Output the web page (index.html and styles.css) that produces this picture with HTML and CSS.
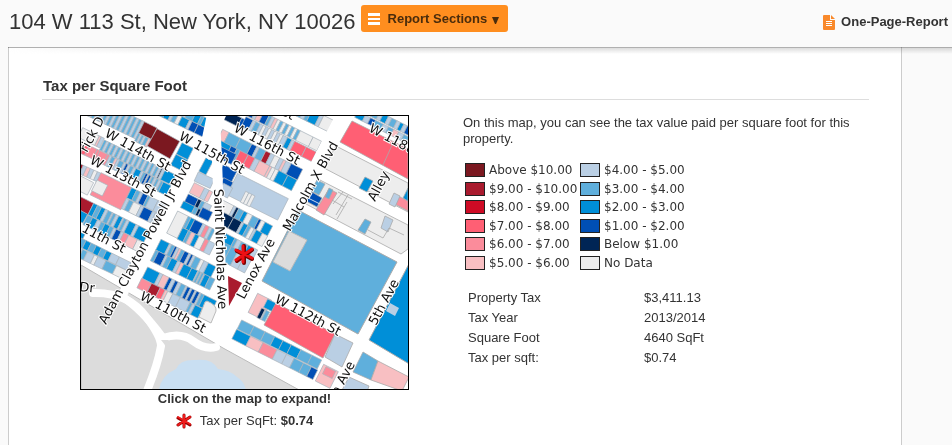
FILE: index.html
```html
<!DOCTYPE html>
<html lang="en">
<head>
    <meta charset="UTF-8">
    <meta name="viewport" content="width=device-width, initial-scale=1.0">
    <title>104 W 113 St, New York, NY 10026</title>
    <link rel="stylesheet" href="styles.css">
</head>
<body>
    <header class="top-bar">
        <h1>104 W 113 St, New York, NY 10026</h1>
        <button type="button" class="sections-btn">
            <svg class="menu-icon" viewBox="0 0 12 12" aria-hidden="true"><path d="M0 0h12v3H0zM0 5h12v2H0zM0 9h12v3H0z" fill="#fff"/></svg>
            <span>Report Sections</span>
            <svg class="caret" viewBox="0 0 8 8" aria-hidden="true"><path d="M0 1h7L4 8H3z" fill="#4a2c0c"/></svg>
        </button>
        <a href="#one-page" class="one-page">
            <svg viewBox="0 0 12 15" aria-hidden="true">
                <path d="M1 0h6v5h5v9q0 1-1 1H1q-1 0-1-1V1q0-1 1-1z" fill="#f9892b"/>
                <path d="M8 0l4 4H8z" fill="#f9892b"/>
                <path d="M3 6.500h6M3 8.500h6M3 10.500h6" stroke="#fff"/>
            </svg>
            <span>One-Page-Report</span>
        </a>
    </header>

    <main class="card">
        <h2>Tax per Square Foot</h2>
        <div class="columns">
            <section class="map-col">
                <a href="#map" class="map-link">
                    <svg class="map" viewBox="0 0 327 273" role="img" aria-label="Tax map">
                        <rect width="327" height="273" fill="#fff"/>
                        <!-- park -->
                        <path d="M0 149L142 232L220 275H0z" fill="#dcdcdc" stroke="#bbb"/>
                        <path d="M78 273q3-14 17-20q4-10 20-9q16-2 22 9q12 1 19 8q8 5 9 14z" fill="#c9dff2"/>
                        <g fill="none" stroke="#fff" stroke-linecap="round">
                            <path d="M12 177Q48 176 66 202Q80 221 80 230Q77 248 66 275" stroke-width="8"/>
                            <path d="M40 180Q60 192 82 222Q100 216 112 225T135 231" stroke-width="8"/>
                        </g>
                        <path d="M80 224h8l-4 5z" fill="#dcdcdc"/>
                        <!-- parcels.js works in thirds of a map pixel -->
                        <g id="parcels" transform="scale(.3333)"></g>

                        <g stroke="#aaa" stroke-width=".8">
                            <path d="M271 5L327 33V63L259 26z" fill="#ff5f74"/>
                            <path d="M312 27l-10 22" fill="none"/>
                            <path d="M255 30L327 67V96L243 52z" fill="#ededed"/>
                            <path d="M284 61l8 4-6 11-8-4z" fill="#008fd8"/>
                            <path d="M317 80l10 5v10l-15-8z" fill="#fb8c9b"/>
                            <path d="M313 77l6 3-5 11-6-3z" fill="#bacfe4"/>
                            <path d="M327 72v13l-5-3z" fill="#008fd8"/>
                            <path d="M237 63L327 109V133L320 138L225 88z" fill="#ededed"/>
                            <path d="M236 64l8 4-6 11-8-4z" fill="#5fafdc"/>
                            <path d="M231 76l10 6-5 9-11-6z" fill="#004fb5"/>
                            <path d="M227 82l12 6" stroke="#fff"/>
                            <path d="M248 73l8 4-13 22-8-5z" fill="#fb8c9b"/>
                            <path d="M244 81l4 2 4-9-4-2z" fill="#5fafdc"/>
                            <path d="M262 76L252 88M267 79l-12 20M251 84l12 7M257 76l14 7" fill="none"/>
                            <path d="M284 103l6 3-6 12-7-4z" fill="#5fafdc"/>
                            <path d="M304 100l8 4-5 12-7-4z" fill="#bacfe4"/>
                            <path d="M266 86l-10 17M287 114l15 8 6-10 15 7" fill="none"/>
                        </g>
                        <path d="M217 94L316 146L277 218L181 165z" fill="#5fafdc" stroke="#aaa"/>
                        <path d="M208 115l18 9-17 31-17-9z" fill="#dcdcdc" stroke="#bbb"/>
                        <path d="M330 144L288 224L330 249z" fill="#008fd8" stroke="#aaa"/>
                        <path d="M309 187l9 5-4 8-9-5z" fill="#bacfe4"/>
                        <g stroke="#aaa" stroke-width=".8">
                            <path d="M195 187L254 218L242 242L183 209z" fill="#ff5f74"/>
                            <path d="M254 218l18 9-11 24-17-10z" fill="#bacfe4"/>
                            <path d="M282 236l15 9-7 19-18-8z" fill="#5fafdc"/>
                            <path d="M297 245l31 16-7 14-31-11z" fill="#f8bfc2"/>
                            <path d="M268 261l20 9-2 6h-26z" fill="#bacfe4"/>
                        </g>

                        <!-- avenues -->
                        <g fill="none" stroke="#fff">
                            <path d="M137 -5L121 34L56 150L40 182" stroke-width="9"/>
                            <path d="M134 0L136 43L141 190" stroke-width="10"/>
                            <path d="M264 -10L228 60L160 192" stroke-width="9"/>
                        </g>
                        <path d="M126 -2H146L138 14L137 38L128 44L118 36z" fill="#fff"/>
                        <path d="M147 160l14 7-13 23z" fill="#a91b2e"/>
                        <path d="M126 185q10 4 9 10l-5 12-12-6 6-15z" fill="#ededed" stroke="#bbb"/>

                        <g class="street">
                            <text transform="translate(23 20) rotate(29)">W 114th St</text>
                            <text transform="translate(8 47) rotate(28)">W 113th St</text>
                            <text transform="translate(97 23) rotate(29)">W 115th St</text>
                            <text transform="translate(152 15) rotate(28)">W 116th St</text>
                            <text transform="translate(287 15) rotate(28)">W 118th St</text>
                            <text transform="translate(0 115) rotate(28)">11th St</text>
                            <text transform="translate(58 183) rotate(28)">W 110th St</text>
                            <text transform="translate(193 186) rotate(28)">W 112th St</text>
                            <text transform="translate(199 -2) rotate(28)">St</text>
                            <text transform="translate(-2 175) rotate(6)">Dr</text>
                            <text transform="translate(25 209) rotate(-62)">Adam Clayton Powell Jr Blvd</text>
                            <text transform="translate(133 73) rotate(88)">Saint Nicholas Ave</text>
                            <text transform="translate(163 184) rotate(-62)">Lenox Ave</text>
                            <text transform="translate(209 116) rotate(-61)">Malcolm X Blvd</text>
                            <text transform="translate(294 86) rotate(-62)">Alley</text>
                            <text transform="translate(295 210) rotate(-62)">5th Ave</text>
                            <text transform="translate(251 292) rotate(-62)">5th Ave</text>
                            <text transform="translate(6 37) rotate(-62)">rick D</text>
                        </g>
                        <g fill="none" stroke-linecap="round">
                            <path d="M163 130v17M156 135l15 8M156 145l15-11" stroke="#700" stroke-width="4"/>
                            <path d="M162 130v16M155 134l16 8M155 144l16-11" stroke="#ee0f14" stroke-width="3"/>
                        </g>
                    </svg>
                    <strong>Click on the map to expand!</strong>
                </a>
                <p class="map-key">
                    <svg viewBox="0 0 16 16" aria-hidden="true">
                        <g fill="none" stroke-linecap="round">
                            <path d="M8 2v12M2 5l12 7M2 12l12-8" stroke="#900" stroke-width="3"/>
                            <path d="M8 2v12M2 4l12 7M2 12l12-8" stroke="#ee1c1c" stroke-width="2"/>
                        </g>
                    </svg>
                    <span>Tax per SqFt: <b>$0.74</b></span>
                </p>
            </section>

            <section class="info-col">
                <p>On this map, you can see the tax value paid per square foot for this property.</p>
                <ul class="legend">
                    <li><i class="swatch c-above"></i>Above $10.00</li>
                    <li><i class="swatch c-9"></i>$9.00 - $10.00</li>
                    <li><i class="swatch c-8"></i>$8.00 - $9.00</li>
                    <li><i class="swatch c-7"></i>$7.00 - $8.00</li>
                    <li><i class="swatch c-6"></i>$6.00 - $7.00</li>
                    <li><i class="swatch c-5"></i>$5.00 - $6.00</li>
                    <li><i class="swatch c-4"></i>$4.00 - $5.00</li>
                    <li><i class="swatch c-3"></i>$3.00 - $4.00</li>
                    <li><i class="swatch c-2"></i>$2.00 - $3.00</li>
                    <li><i class="swatch c-1"></i>$1.00 - $2.00</li>
                    <li><i class="swatch c-below"></i>Below $1.00</li>
                    <li><i class="swatch c-none"></i>No Data</li>
                </ul>
                <table class="facts">
                    <tr><th scope="row">Property Tax</th><td>$3,411.13</td></tr>
                    <tr><th scope="row">Tax Year</th><td>2013/2014</td></tr>
                    <tr><th scope="row">Square Foot</th><td>4640 SqFt</td></tr>
                    <tr><th scope="row">Tax per sqft:</th><td>$0.74</td></tr>
                </table>
            </section>
        </div>
    </main>
    <script src="parcels.js"></script>
</body>
</html>
```

FILE: styles.css
```css
* {
    box-sizing: border-box;
}

body {
    margin: 0;
    min-height: 100vh;
    display: flex;
    flex-direction: column;
    background: #fafafa;
    color: #333;
    font-family: "Liberation Sans", Arial, sans-serif;
    font-size: 13px;
}

h1, h2, p, ul {
    margin: 0;
    padding: 0;
}

.top-bar {
    display: flex;
    align-items: flex-start;
    padding: 5px 4px 15px 9px;
}

h1 {
    font-size: 22px;
    font-weight: normal;
    line-height: 27px;
    padding-top: 3px;
    margin-bottom: -3px;
    margin-right: 5px;
}

.sections-btn {
    display: flex;
    align-items: center;
    height: 27px;
    padding: 0 8px 0 7px;
    border: 0;
    border-radius: 3px;
    background: #ff8e1f;
    color: #4a2c0c;
    font: bold 13px "Liberation Sans", Arial, sans-serif;
    cursor: pointer;
}

.menu-icon {
    width: 12px;
    height: 12px;
    margin-right: 8px;
}

.caret {
    width: 8px;
    height: 8px;
    margin: 3px 0 0 5px;
}

.one-page {
    display: flex;
    align-items: center;
    gap: 6px;
    margin-left: auto;
    padding-top: 9px;
    color: #333;
    font-weight: bold;
    line-height: 16px;
    text-decoration: none;
}

.one-page svg {
    width: 12px;
    height: 15px;
}

.card {
    flex: 1;
    margin: 0 50px 0 8px;
    padding: 29px 32px 14px 33px;
    border: solid #ccc;
    border-width: 0 1px;
    background: #fff;
}

/* line and soft shadow under the header */
.top-bar::after {
    content: "";
    position: absolute;
    top: 47px;
    left: 8px;
    right: 0;
    height: 6px;
    border-top: 1px solid #b0b0b0;
    background: linear-gradient(to right, #fff, rgba(255, 255, 255, 0) 30%), linear-gradient(#ddd, rgba(255, 255, 255, 0));
    mix-blend-mode: multiply;
}

h2 {
    font-size: 15px;
    line-height: 20px;
    padding: 0 1px 3px;
    border-bottom: 1px solid #ddd;
}

.columns {
    display: flex;
    gap: 54px;
    padding: 15px 0 0 38px;
}

.map-col {
    width: 329px;
    flex: none;
    text-align: center;
}

.map-link {
    display: block;
    color: #333;
    line-height: 18px;
    text-decoration: none;
}

.map {
    display: block;
    width: 100%;
    border: 1px solid #000;
}

.street text {
    font: 13px "DejaVu Sans", sans-serif;
    fill: #111;
    stroke: #fff;
    stroke-width: 2;
    paint-order: stroke;
}

.map-key {
    display: flex;
    justify-content: center;
    align-items: center;
    gap: 8px;
    margin-top: 5px;
    line-height: 16px;
}

.map-key svg {
    width: 16px;
    height: 16px;
}

.info-col {
    flex: 1;
}

.info-col p {
    line-height: 16px;
}

.legend {
    display: grid;
    grid-template-rows: repeat(6, 1fr);
    grid-auto-flow: column;
    grid-auto-columns: 115px;
    height: 111px;
    margin: 14px 0 0 2px;
    list-style: none;
    font-family: "DejaVu Sans", sans-serif;
    font-size: 12px;
    white-space: nowrap;
}

.legend li {
    display: flex;
    align-items: center;
    gap: 4px;
}

.swatch {
    width: 20px;
    height: 14px;
    border: 1px solid #222;
}

.c-above { background: #7b1820; }
.c-9 { background: #a91b2e; }
.c-8 { background: #ce0b25; }
.c-7 { background: #ff5f74; }
.c-6 { background: #fb8c9b; }
.c-5 { background: #f8bfc2; }
.c-4 { background: #bacfe4; }
.c-3 { background: #5fafdc; }
.c-2 { background: #008fd8; }
.c-1 { background: #004fb5; }
.c-below { background: #002555; }
.c-none { background: #ededed; }

.facts {
    margin: 16px 0 0 5px;
    border-collapse: collapse;
    line-height: 20px;
}

.facts th, .facts td {
    padding: 0;
    font-weight: normal;
    text-align: left;
}

.facts th {
    width: 176px;
}
```

FILE: parcels.js
```js
const colors = {
    a: '#7b1820', 9: '#a91b2e', 8: '#ce0b25', 7: '#ff5f74', 6: '#fb8c9b', 5: '#f8bfc2',
    4: '#bacfe4', 3: '#5fafdc', 2: '#008fd8', 1: '#004fb5', 0: '#002555', n: '#ededed'
};

// [x1, y1, x2, y2 of the row's upper edge, depth, lots as colour + share of the width]
const rows = [
    // west of Powell Blvd
    [240, -60, 395, 15, 28, '33 43 34 24 32 44 35 24 32 26'],
    [228, -35, 382, 40, 28, '44 34 24 42 33 n3 26 42 15 18'],
    [40, -55, 190, 17, 58, '32 42 32 42 32 42 32 42 32 42 32 42 32 42 32 42 32 42 32 42'],
    [190, 17, 228, 36, 38, 'a9'],
    [172, 52, 208, 70, 26, '32 42 32 42 33 52'],
    [228, 38, 296, 76, 60, 'a9'],
    [303, 80, 337, 97, 38, '29'],
    [285, 115, 320, 133, 36, '29'],
    [5, 35, 70, 67, 32, 'n9 n8 52 43'],
    [-20, 68, 57, 104, 32, 'n9 53 74 69 63'],
    [70, 72, 285, 177, 33, '32 42 32 42 32 42 32 42 32 42 32 42 32 42 32 42 32 42 32 42 32 42 32 42 01 42 29'],
    [57, 104, 270, 209, 33, '67 62 42 33 52 42 34 42 12 42 33 42 25 42 32 12 41 12 41 32 42 32 42 32 27'],
    [0, 145, 60, 172, 28, '92 43 53 43 n3 43'],
    [-5, 178, 38, 200, 42, 'n9'],
    [60, 170, 152, 215, 74, '69'],
    [48, 192, 80, 208, 36, 'n9'],
    [152, 215, 265, 270, 34, '24 33 42 14 32 46 49'],
    [136, 247, 250, 303, 34, '42 33 n5 42 16 42 46'],
    [-10, 238, 38, 262, 38, '99'],
    [38, 262, 205, 345, 38, '23 33 23 42 33 41 32 42 23 41 32 42 25 42 28'],
    [-30, 268, 20, 295, 30, '23 33 24'],
    [20, 297, 188, 380, 32, '34 24 43 33 24 33 42 14 42 64 57 n5'],
    [-15, 342, 12, 355, 18, '92 22'],
    [0, 366, 150, 440, 26, '34 24 34 24 34 24 46 49'],
    [-12, 392, 138, 464, 28, '45 34 46 n3 47 39 n9'],
    // between Powell Blvd and St Nicholas
    [375, 125, 396, 136, 46, '29'],
    [352, 168, 400, 190, 30, '49'],
    [340, 200, 395, 228, 34, '59 44 53'],
    [322, 234, 392, 269, 34, '19 03 33 46'],
    [308, 255, 390, 296, 22, '29 33 02 18'],
    [365, 274, 395, 289, 30, '19'],
    [290, 285, 322, 301, 74, 'n9'],
    [322, 301, 402, 341, 38, '33 24 19 43 64 43 33'],
    [305, 335, 402, 383, 38, '26 33 54 24 n6 64 46'],
    [240, 370, 405, 452, 36, '28 42 33 12 42 52 33 14 42 12 42 35 n3 44 27'],
    [224, 402, 402, 490, 36, '33 17 42 34 26 43 53 28 26 41 32 41 32 41 25 35'],
    [200, 453, 407, 555, 38, '28 42 54 12 42 12 42 33 41 12 41 12 41 12 41 32 28'],
    [182, 487, 365, 578, 32, '68 97 74 52 n4 46 48 32 42 26'],
    // St Nicholas to Lenox
    [600, -65, 768, 18, 38, '23 42 32 12 44 32 42 32 25 42 n8'],
    [430, -20, 500, 15, 28, '09 13'],
    [510, -30, 722, 76, 32, '14 42 53 14 32 42 52 n2 32 n2 32 n2 32 n2 32 n9 n6'],
    [495, 2, 706, 108, 32, '15 42 33 42 n2 42 n2 42 n2 42 n2 43 23 42 78 77'],
    [425, 40, 665, 160, 36, '55 39 39 14 42 35 94 43 n4 43 52 44 19'],
    [420, 74, 648, 192, 36, '29 15 33 77 76 44 59 52 n3 n3 28 28'],
    [420, 92, 466, 115, 34, '19'],
    [427, 145, 468, 166, 38, '19'],
    [428, 185, 472, 207, 24, '19 '],
    [470, 172, 622, 248, 72, '49'],
    [428, 202, 455, 216, 34, '49'],
    [494, 226, 522, 240, 36, 'n3 n3 n3'],
    [425, 252, 575, 330, 34, 'n9 42 02 34 23 n4 35 12 n3 26'],
    [430, 290, 560, 360, 36, '09 08 42 24 33 n3 42 26 n5'],
    [430, 350, 530, 402, 30, '28 32 43 35 24 43'],
    [430, 380, 515, 425, 52, '39 39 49 49'],
    // above 118th
    [840, -40, 1000, 40, 24, '16 42 33 42 23 42 33 42 22 42 14'],
    [830, -14, 1000, 71, 20, '23 42 12 33 42 32 52 42 32 42'],
    // south-east
    [530, 532, 572, 553, 64, '59'],
    [560, 549, 588, 563, 28, '29'],
    [542, 576, 566, 588, 32, '03 41 33'],
    [482, 612, 722, 732, 30, '39 38 37 26 26 27 38 37'],
    [467, 640, 710, 762, 32, '29 58 69 46 45 36 35 14'],
    [728, 745, 772, 767, 56, '59'],
    [735, 752, 764, 766, 24, '69']
];

const parcels = document.getElementById('parcels');

rows.forEach(([x1, y1, x2, y2, depth, lots]) => {
    const length = Math.hypot(x2 - x1, y2 - y1);
    const angle = Math.atan2(y2 - y1, x2 - x1) * 180 / Math.PI;
    const list = lots.trim().split(' ');
    const total = list.reduce((sum, lot) => sum + Number(lot[1]), 0);

    const row = document.createElementNS('http://www.w3.org/2000/svg', 'g');
    row.setAttribute('transform', `translate(${x1} ${y1}) rotate(${angle})`);
    row.setAttribute('stroke', '#aab4bc');
    row.setAttribute('stroke-width', 2);

    let x = 0;
    list.forEach(lot => {
        const width = Number(lot[1]) / total * length;
        const rect = document.createElementNS('http://www.w3.org/2000/svg', 'rect');
        rect.setAttribute('x', x);
        rect.setAttribute('width', width);
        rect.setAttribute('height', depth);
        rect.setAttribute('fill', colors[lot[0]]);
        row.appendChild(rect);
        x += width;
    });
    parcels.appendChild(row);
});
```
